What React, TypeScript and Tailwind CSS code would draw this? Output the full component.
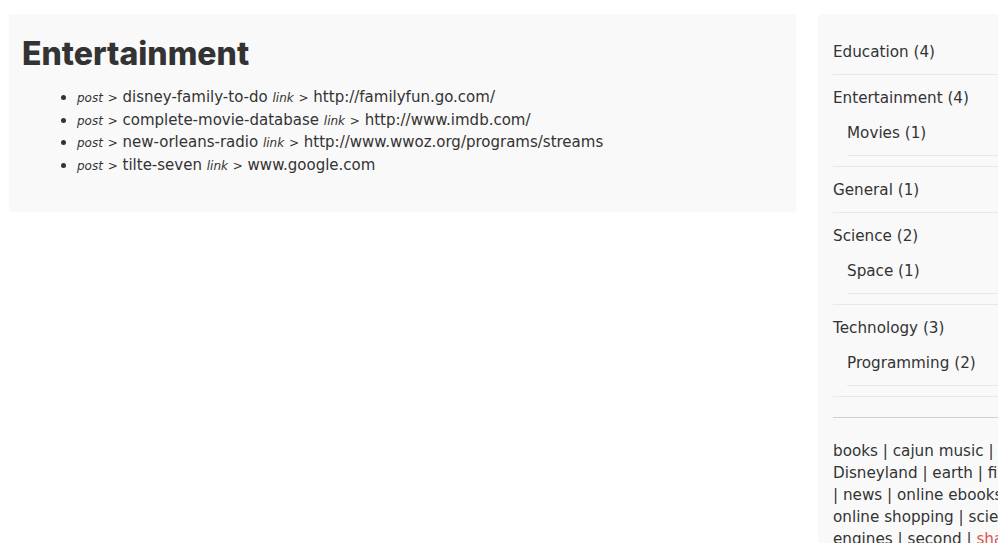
const posts = [
  { slug: "disney-family-to-do", url: "http://familyfun.go.com/" },
  { slug: "complete-movie-database", url: "http://www.imdb.com/" },
  { slug: "new-orleans-radio", url: "http://www.wwoz.org/programs/streams" },
  { slug: "tilte-seven", url: "www.google.com" },
];

type Category = { name: string; count: number; children?: Category[] };

const categories: Category[] = [
  { name: "Education", count: 4 },
  { name: "Entertainment", count: 4, children: [{ name: "Movies", count: 1 }] },
  { name: "General", count: 1 },
  { name: "Science", count: 2, children: [{ name: "Space", count: 1 }] },
  { name: "Technology", count: 3, children: [{ name: "Programming", count: 2 }] },
];

const tags = [
  "books",
  "cajun music",
  "comedy",
  "Disneyland",
  "earth",
  "films",
  "movies",
  "news",
  "online ebooks",
  "online TV",
  "online shopping",
  "science",
  "search engines",
  "second",
  "shared hosting",
  "space",
  "technology",
];

const App = () => {
  return (
    <div
      className="w-[998px] h-[543px] overflow-hidden bg-white text-[#333] flex items-start gap-[22px] pt-[14px] pl-[9px]"
      style={{ fontFamily: '"DejaVu Sans", sans-serif' }}
    >
      <div className="w-[787px] shrink-0 bg-[#f9f9f9] pt-[22px] pb-[35px] pl-[13px]">
        <h1
          className="text-[32px] leading-[36px] font-extrabold mb-[14px]"
          style={{ fontFamily: "Inter, sans-serif" }}
        >
          Entertainment
        </h1>
        <ul className="list-disc pl-[55px] text-[15px] leading-[22.7px]">
          {posts.map((p) => (
            <li key={p.slug}>
              <em className="text-[12px] leading-none">post</em>{" "}
              <span className="text-[12px] leading-none">&gt;</span> {p.slug}{" "}
              <em className="text-[12px] leading-none">link</em>{" "}
              <span className="text-[12px] leading-none">&gt;</span> {p.url}
            </li>
          ))}
        </ul>
      </div>

      <div className="w-[298px] shrink-0 bg-[#f9f9f9] rounded-[4px] px-[15px] pt-[15px] pb-6 text-[15.2px]">
        <ul className="leading-[21px]">
          {categories.map((c) => (
            <li
              key={c.name}
              className={`border-b border-[#e8e8e8] pt-[13px] ${c.children ? "pb-[10px]" : "pb-[11px]"}`}
            >
              <span>
                {c.name} ({c.count})
              </span>
              {c.children && (
                <ul className="ml-[14px]">
                  {c.children.map((s) => (
                    <li key={s.name} className="border-b border-[#e8e8e8] pt-[14px] pb-[11px]">
                      {s.name} ({s.count})
                    </li>
                  ))}
                </ul>
              )}
            </li>
          ))}
        </ul>
        <hr className="mt-[20px] border-0 border-t border-[#cfcfcf]" />
        <p className="mt-[22px] leading-[22px]">
          {tags.map((t, i) => (
            <span key={t}>
              {i > 0 && " | "}
              <span className={t === "shared hosting" ? "text-[#d9534f]" : ""}>{t}</span>
            </span>
          ))}
        </p>
      </div>
    </div>
  );
};

export default App;
